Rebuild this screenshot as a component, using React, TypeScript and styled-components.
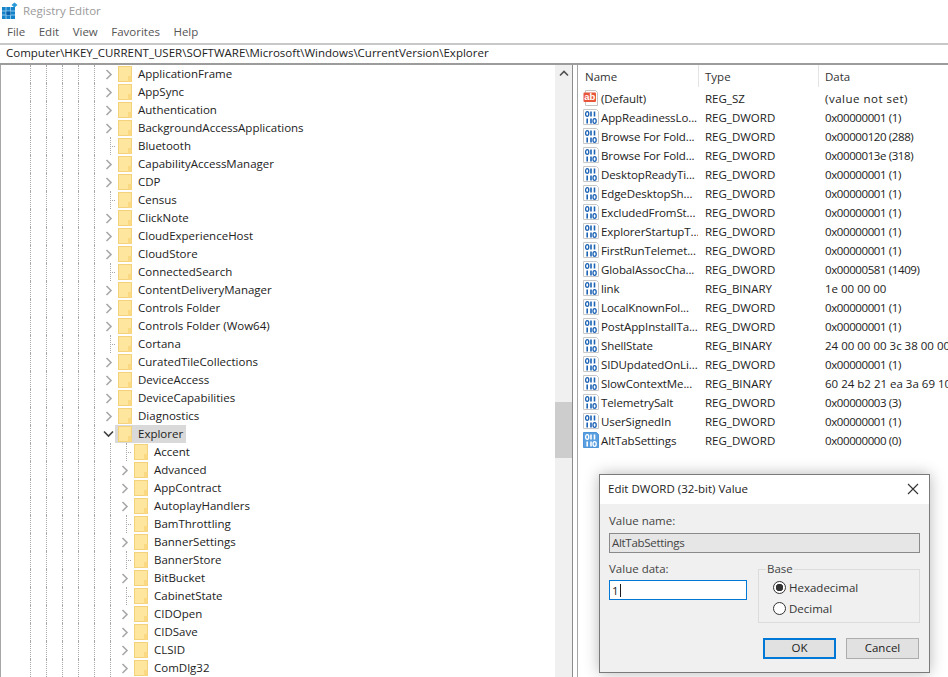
import styled, { createGlobalStyle } from "styled-components";

const GlobalStyle = createGlobalStyle`
  html, body {
    margin: 0;
    padding: 0;
    background: #ffffff;
  }
  * {
    box-sizing: border-box;
  }
`;

type TreeItem = { name: string; kind: "closed" | "leaf" | "open" };

const closed = (name: string): TreeItem => ({ name, kind: "closed" });
const leaf = (name: string): TreeItem => ({ name, kind: "leaf" });

const topKeys: TreeItem[] = [
  closed("ApplicationFrame"),
  closed("AppSync"),
  closed("Authentication"),
  closed("BackgroundAccessApplications"),
  leaf("Bluetooth"),
  closed("CapabilityAccessManager"),
  closed("CDP"),
  leaf("Census"),
  closed("ClickNote"),
  closed("CloudExperienceHost"),
  closed("CloudStore"),
  leaf("ConnectedSearch"),
  closed("ContentDeliveryManager"),
  closed("Controls Folder"),
  closed("Controls Folder (Wow64)"),
  leaf("Cortana"),
  closed("CuratedTileCollections"),
  closed("DeviceAccess"),
  closed("DeviceCapabilities"),
  closed("Diagnostics"),
  { name: "Explorer", kind: "open" },
];

const explorerKeys: TreeItem[] = [
  leaf("Accent"),
  closed("Advanced"),
  closed("AppContract"),
  closed("AutoplayHandlers"),
  leaf("BamThrottling"),
  closed("BannerSettings"),
  leaf("BannerStore"),
  closed("BitBucket"),
  leaf("CabinetState"),
  closed("CIDOpen"),
  closed("CIDSave"),
  closed("CLSID"),
  closed("ComDlg32"),
];

const values = [
  ["(Default)", "REG_SZ", "(value not set)"],
  ["AppReadinessLo...", "REG_DWORD", "0x00000001 (1)"],
  ["Browse For Fold...", "REG_DWORD", "0x00000120 (288)"],
  ["Browse For Fold...", "REG_DWORD", "0x0000013e (318)"],
  ["DesktopReadyTi...", "REG_DWORD", "0x00000001 (1)"],
  ["EdgeDesktopSh...", "REG_DWORD", "0x00000001 (1)"],
  ["ExcludedFromSt...", "REG_DWORD", "0x00000001 (1)"],
  ["ExplorerStartupT...", "REG_DWORD", "0x00000001 (1)"],
  ["FirstRunTelemet...", "REG_DWORD", "0x00000001 (1)"],
  ["GlobalAssocCha...", "REG_DWORD", "0x00000581 (1409)"],
  ["link", "REG_BINARY", "1e 00 00 00"],
  ["LocalKnownFol...", "REG_DWORD", "0x00000001 (1)"],
  ["PostAppInstallTa...", "REG_DWORD", "0x00000001 (1)"],
  ["ShellState", "REG_BINARY", "24 00 00 00 3c 38 00 00 00 00 00 00"],
  ["SIDUpdatedOnLi...", "REG_DWORD", "0x00000001 (1)"],
  ["SlowContextMe...", "REG_BINARY", "60 24 b2 21 ea 3a 69 10 a2 dc 00 08"],
  ["TelemetrySalt", "REG_DWORD", "0x00000003 (3)"],
  ["UserSignedIn", "REG_DWORD", "0x00000001 (1)"],
  ["AltTabSettings", "REG_DWORD", "0x00000000 (0)"],
];

const AppIcon = () => (
  <svg width="17" height="18" viewBox="0 0 17 18">
    <rect x="1" y="5" width="13" height="12" fill="#1583c9" />
    <path d="M1 9h13M1 13h13M5 5v12M9.500 5v12" stroke="#8cc6ea" strokeWidth="1" />
    <rect x="5.500" y="9.500" width="4" height="3.500" fill="#0a5fa8" />
    <path d="M13.500 0.500l3 2.500-3 2.500-3-2.500z" fill="#2b9ad8" />
  </svg>
);

const FolderIcon = () => (
  <svg width="14" height="16" viewBox="0 0 14 16">
    <rect x="0.500" y="0.500" width="13" height="15" fill="#fee69f" stroke="#f4d27c" />
    <rect x="10" y="10" width="3.500" height="5.500" fill="#fbd982" />
  </svg>
);

const ChevronRight = () => (
  <svg width="8" height="11" viewBox="0 0 8 11">
    <path d="M1.500 1l4.500 4.500-4.500 4.500" fill="none" stroke="#a8a8a8" strokeWidth="1.600" />
  </svg>
);

const ChevronDown = () => (
  <svg width="11" height="8" viewBox="0 0 11 8">
    <path d="M1 1.500l4.500 4.500 4.500-4.500" fill="none" stroke="#404040" strokeWidth="1.600" />
  </svg>
);

const ChevronUp = () => (
  <svg width="10" height="7" viewBox="0 0 10 7">
    <path d="M1 5.500l4-4 4 4" fill="none" stroke="#505050" strokeWidth="1.600" />
  </svg>
);

const StringIcon = () => (
  <IconSvg width="16" height="17" viewBox="0 0 16 17">
    <path d="M2.500 0.500h10l2 2v13h-12z" fill="#ffffff" stroke="#c4c4c4" />
    <rect x="0.500" y="2.500" width="12.500" height="9.500" rx="1" fill="#e8563a" />
    <text x="6.700" y="10.300" textAnchor="middle" fontFamily="Liberation Sans" fontWeight="700" fontSize="9.500" fill="#ffffff">
      ab
    </text>
  </IconSvg>
);

const BinaryIcon = ({ selected }: { selected: boolean }) => {
  const ink = selected ? "#ffffff" : "#1c63b5";
  return (
    <IconSvg width="16" height="17" viewBox="0 0 16 17">
      <path
        d="M0.500 0.500h13l2 2v13h-15z"
        fill={selected ? "#5a9fe0" : "#ffffff"}
        stroke={selected ? "#4d94d8" : "#c8c8c8"}
      />
      <ellipse cx="4.200" cy="5" rx="1.600" ry="2.300" fill="none" stroke={ink} strokeWidth="1.300" />
      <path d="M8 2.500v5M11.500 2.500v5M4.200 9.500v5M8 9.500v5" stroke={ink} strokeWidth="1.600" />
      <ellipse cx="11.600" cy="12" rx="1.600" ry="2.300" fill="none" stroke={ink} strokeWidth="1.300" />
    </IconSvg>
  );
};

const CloseIcon = () => (
  <svg width="12" height="12" viewBox="0 0 12 12">
    <path d="M1 1l10 10M11 1L1 11" stroke="#333333" strokeWidth="1.100" />
  </svg>
);

const TreeRow = ({ item, depth }: { item: TreeItem; depth: number }) => (
  <Row>
    {Array.from({ length: depth }).map((_, i) => (
      <Guide key={i} />
    ))}
    {item.kind === "leaf" ? (
      <Expander>
        <LeafLine />
        <LeafTick />
      </Expander>
    ) : (
      <Expander $center>{item.kind === "open" ? <ChevronDown /> : <ChevronRight />}</Expander>
    )}
    <Node $selected={item.kind === "open"}>
      <FolderIcon />
      <NodeLabel>{item.name}</NodeLabel>
    </Node>
  </Row>
);

const App = () => {
  return (
    <Window>
      <GlobalStyle />
      <TitleBar>
        <AppIcon />
        <TitleText>Registry Editor</TitleText>
      </TitleBar>
      <MenuBar>
        <MenuItem>File</MenuItem>
        <MenuItem>Edit</MenuItem>
        <MenuItem>View</MenuItem>
        <MenuItem>Favorites</MenuItem>
        <MenuItem>Help</MenuItem>
      </MenuBar>
      <AddressBar>Computer\HKEY_CURRENT_USER\SOFTWARE\Microsoft\Windows\CurrentVersion\Explorer</AddressBar>
      <Panes>
        <TreePane>
          <TreeList>
            {topKeys.map((item) => (
              <TreeRow key={item.name} item={item} depth={5} />
            ))}
            {explorerKeys.map((item) => (
              <TreeRow key={item.name} item={item} depth={6} />
            ))}
          </TreeList>
          <ScrollBar>
            <ScrollArrow>
              <ChevronUp />
            </ScrollArrow>
            <ScrollThumb />
          </ScrollBar>
        </TreePane>
        <Splitter />
        <ListPane>
          <ListHeader>
            <HeaderCell>Name</HeaderCell>
            <HeaderCell>Type</HeaderCell>
            <HeaderCell>Data</HeaderCell>
          </ListHeader>
          {values.map(([name, type, data], i) => (
            <ValueRow key={i}>
              <NameCell>
                {type === "REG_SZ" ? <StringIcon /> : <BinaryIcon selected={name === "AltTabSettings"} />}
                <span>{name}</span>
              </NameCell>
              <ValueCell>{type}</ValueCell>
              <ValueCell $tracking={data.startsWith("0x") ? -0.4 : type === "REG_SZ" ? 0.5 : 0}>{data}</ValueCell>
            </ValueRow>
          ))}
        </ListPane>
      </Panes>
      <Dialog>
        <DialogTitle>
          <span>Edit DWORD (32-bit) Value</span>
          <CloseIcon />
        </DialogTitle>
        <DialogBody>
          <FieldLabel>Value name:</FieldLabel>
          <ReadOnlyBox>AltTabSettings</ReadOnlyBox>
          <DataRow>
            <DataColumn>
              <FieldLabel>Value data:</FieldLabel>
              <DataInput>
                1<Caret />
              </DataInput>
            </DataColumn>
            <BaseGroup>
              <BaseLegend>Base</BaseLegend>
              <RadioRow>
                <Radio $checked />
                Hexadecimal
              </RadioRow>
              <RadioRow>
                <Radio />
                Decimal
              </RadioRow>
            </BaseGroup>
          </DataRow>
          <ButtonRow>
            <DialogButton $primary>OK</DialogButton>
            <DialogButton>Cancel</DialogButton>
          </ButtonRow>
        </DialogBody>
      </Dialog>
    </Window>
  );
};

export default App;

const Window = styled.div`
  position: relative;
  width: 948px;
  height: 677px;
  overflow: hidden;
  background: #ffffff;
  display: flex;
  flex-direction: column;
  font-family: "Open Sans", "Noto Sans", sans-serif;
  font-size: 11.5px;
  color: #222222;
`;

const IconSvg = styled.svg`
  flex: none;
`;

const TitleBar = styled.div`
  height: 22px;
  flex: none;
  display: flex;
  align-items: center;
  gap: 5px;
  padding-left: 1px;
`;

const TitleText = styled.span`
  padding-bottom: 2px;
  color: #9a9a9a;
`;

const MenuBar = styled.div`
  height: 21px;
  flex: none;
  display: flex;
  align-items: center;
  gap: 13.5px;
  padding: 0 0 2px 7px;
`;

const MenuItem = styled.span`
  color: #555555;
`;

const AddressBar = styled.div`
  height: 22px;
  flex: none;
  display: flex;
  align-items: center;
  padding: 0 0 3px 6px;
  border-top: 2px solid #c8c8c8;
  border-bottom: 2px solid #9c9c9c;
`;

const Panes = styled.div`
  flex: 1;
  min-height: 0;
  display: flex;
`;

const TreePane = styled.div`
  width: 573px;
  flex: none;
  display: flex;
  border-left: 1px solid #a6a6a6;
  border-right: 1px solid #8c8c8c;
`;

const TreeList = styled.div`
  flex: 1;
  min-width: 0;
  padding-left: 21px;
  overflow: hidden;
`;

const Row = styled.div`
  height: 18px;
  display: flex;
  align-items: stretch;
`;

const Guide = styled.span`
  width: 8px;
  margin-left: 8px;
  flex: none;
  border-left: 1px dotted #a8a8a8;
`;

const Expander = styled.span<{ $center?: boolean }>`
  width: 13px;
  flex: none;
  display: flex;
  align-items: center;
  justify-content: ${(p) => (p.$center ? "center" : "flex-start")};
`;

const LeafLine = styled.span`
  width: 1px;
  height: 100%;
  margin-left: 8px;
  border-left: 1px dotted #a8a8a8;
`;

const LeafTick = styled.span`
  width: 5px;
  margin-left: 1px;
  border-top: 1px dotted #a8a8a8;
`;

const Node = styled.span<{ $selected: boolean }>`
  display: flex;
  align-items: center;
  gap: 6px;
  padding: 0 3px;
  background: ${(p) => (p.$selected ? "#d9d9d9" : "transparent")};
`;

const NodeLabel = styled.span`
  padding-bottom: 2px;
  white-space: nowrap;
`;

const ScrollBar = styled.div`
  width: 17px;
  flex: none;
  background: #f0f0f0;
`;

const ScrollArrow = styled.div`
  height: 17px;
  display: flex;
  align-items: center;
  justify-content: center;
`;

const ScrollThumb = styled.div`
  height: 56px;
  margin-top: 320px;
  background: #cdcdcd;
`;

const Splitter = styled.div`
  width: 4px;
  flex: none;
`;

const ListPane = styled.div`
  flex: 1;
  min-width: 0;
  overflow: hidden;
  border-left: 1px solid #a6a6a6;
`;

const ListHeader = styled.div`
  height: 24px;
  display: grid;
  grid-template-columns: 120px 120px 1fr;
`;

const HeaderCell = styled.div`
  padding: 4px 0 0 7px;
  height: 22px;
  color: #333333;

  & + & {
    padding-left: 6px;
    border-left: 1px solid #e5e5e5;
  }
`;

const ValueRow = styled.div`
  height: 19px;
  display: grid;
  grid-template-columns: 120px 120px 1fr;
  align-items: center;
`;

const NameCell = styled.div`
  display: flex;
  align-items: center;
  gap: 2px;
  padding-left: 5px;
  letter-spacing: -0.1px;
  white-space: nowrap;
  overflow: hidden;
`;

const ValueCell = styled.div<{ $tracking?: number }>`
  padding-left: 7px;
  letter-spacing: ${(p) => p.$tracking ?? 0}px;
  white-space: nowrap;
`;

const Dialog = styled.div`
  position: absolute;
  left: 599px;
  top: 474px;
  width: 331px;
  height: 199px;
  background: #f0f0f0;
  border: 1px solid #7a7a7a;
  box-shadow: 0 0 14px rgba(0, 0, 0, 0.28);
`;

const DialogTitle = styled.div`
  height: 29px;
  background: #ffffff;
  display: flex;
  align-items: center;
  justify-content: space-between;
  padding: 0 10px 2px 8px;
`;

const DialogBody = styled.div`
  padding: 9px 9px 0;
`;

const FieldLabel = styled.div`
  height: 16px;
  line-height: 16px;
  color: #444444;
`;

const ReadOnlyBox = styled.div`
  height: 20px;
  margin-top: 4px;
  padding: 0 0 2px 2px;
  display: flex;
  align-items: center;
  background: #e6e6e6;
  border: 1px solid #8a8a8a;
  color: #444444;
  letter-spacing: -0.3px;
`;

const DataRow = styled.div`
  margin-top: 8px;
  height: 62px;
  display: flex;
  gap: 11px;
`;

const DataColumn = styled.div`
  width: 138px;
  flex: none;
`;

const DataInput = styled.div`
  height: 20px;
  margin-top: 3px;
  padding-left: 2px;
  display: flex;
  align-items: center;
  background: #ffffff;
  border: 1px solid #0078d7;
`;

const Caret = styled.span`
  width: 1px;
  height: 13px;
  margin-left: 1px;
  background: #1c1c1c;
`;

const BaseGroup = styled.fieldset`
  width: 162px;
  height: 62px;
  margin: 0;
  padding: 0 0 0 14px;
  border: 1px solid #dcdcdc;
`;

const BaseLegend = styled.legend`
  padding: 0 1px;
  margin-left: -7px;
  height: 16px;
  line-height: 16px;
  color: #444444;
`;

const RadioRow = styled.div`
  height: 21px;
  display: flex;
  align-items: center;
  gap: 3px;
  color: #333333;
`;

const Radio = styled.span<{ $checked?: boolean }>`
  width: 13px;
  height: 13px;
  flex: none;
  border-radius: 50%;
  border: 1px solid #333333;
  background: ${(p) => (p.$checked ? "radial-gradient(circle, #333333 0 3.5px, #ffffff 4px)" : "#ffffff")};
`;

const ButtonRow = styled.div`
  margin-top: 15px;
  padding-right: 1px;
  display: flex;
  justify-content: flex-end;
  gap: 10px;
`;

const DialogButton = styled.div<{ $primary?: boolean }>`
  width: 73px;
  height: 21px;
  padding-bottom: 2px;
  display: flex;
  align-items: center;
  justify-content: center;
  background: #e1e1e1;
  border: ${(p) => (p.$primary ? "2px solid #0078d7" : "1px solid #adadad")};
`;
